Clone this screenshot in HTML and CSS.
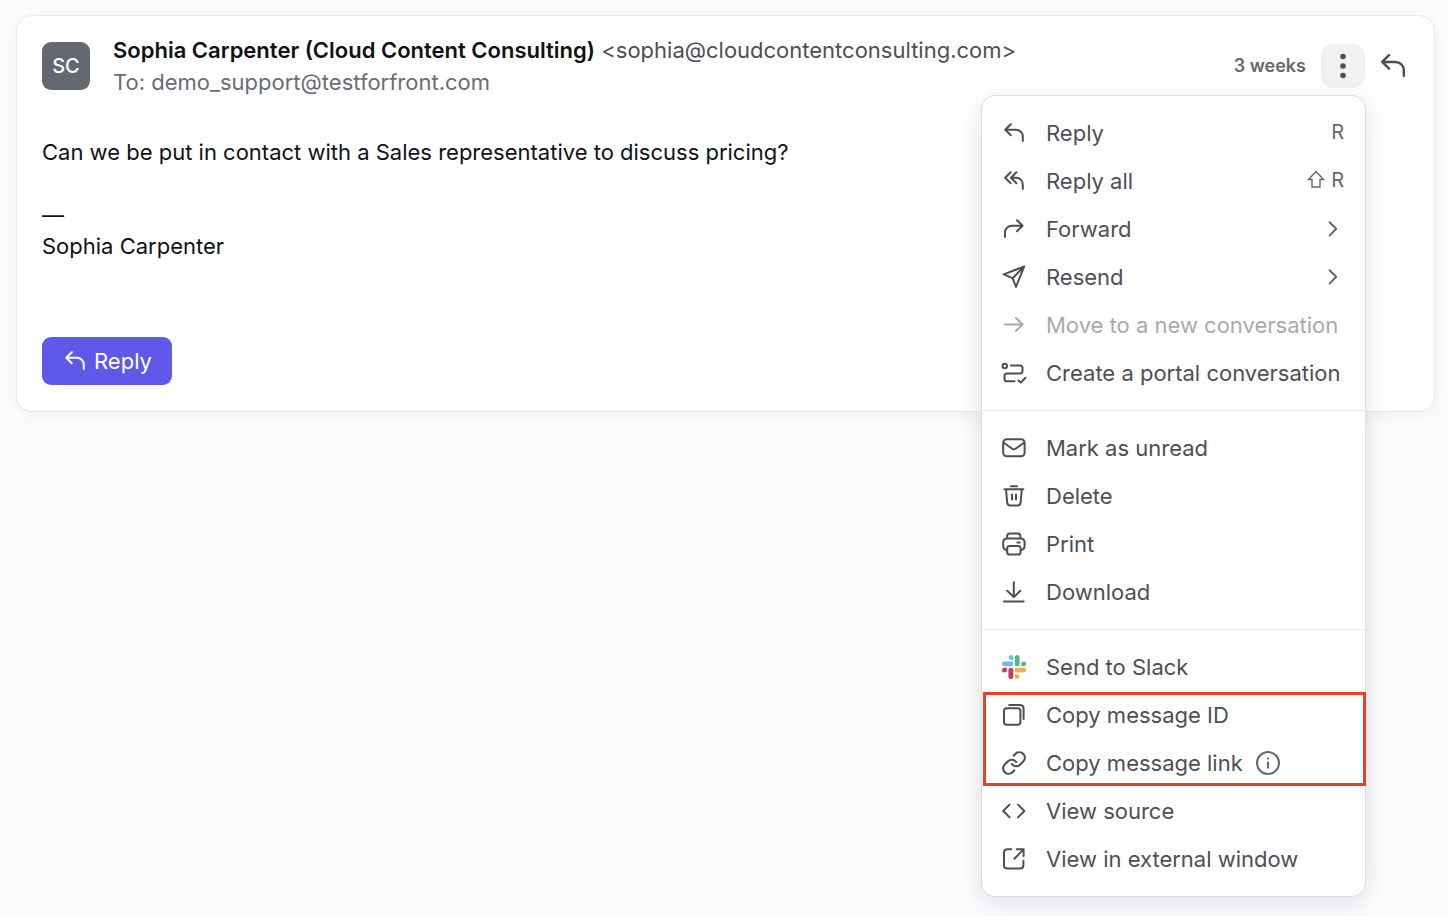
FILE: index.html
```
<!DOCTYPE html>
<html lang="en">
<head>
  <meta charset="UTF-8" />
  <meta name="viewport" content="width=device-width, initial-scale=1.0" />
  <title>Message</title>
  <link rel="stylesheet" href="styles.css">
</head>
<body>
  <article class="message">
    <header class="message-header">
      <div class="avatar">SC</div>
      <div class="message-people">
        <div class="from"><strong>Sophia Carpenter (Cloud Content Consulting)</strong> <span>&lt;sophia@cloudcontentconsulting.com&gt;</span></div>
        <div class="to">To: demo_support@testforfront.com</div>
      </div>
      <time class="age">3 weeks</time>
      <div class="actions">
        <div class="menu-anchor">
          <button class="icon-button active" type="button" aria-label="More actions" aria-expanded="true">
            <svg class="icon-dots" viewBox="0 0 26 26"><circle cx="13" cy="3.5" r="2.8"/><circle cx="13" cy="13" r="2.8"/><circle cx="13" cy="22.5" r="2.8"/></svg>
          </button>

          <div class="menu" role="menu">
            <!-- Reply actions -->
            <div class="menu-section">
              <button class="menu-item" type="button" role="menuitem">
                <svg class="icon" viewBox="0 0 26 26"><path d="M9.8 4.2L4.2 9.7l5.6 5.5M4.4 9.7H15a6.8 6.8 0 0 1 6.8 6.8V21"/></svg>
                <span>Reply</span>
                <kbd>R</kbd>
              </button>
              <button class="menu-item" type="button" role="menuitem">
                <svg class="icon" viewBox="0 0 26 26"><path d="M9.6 4.2L4.2 9.7l5.4 5.5M15.4 4.2L10 9.7l5.4 5.5M10.2 9.7h5a6.6 6.6 0 0 1 6.6 6.6V21"/></svg>
                <span>Reply all</span>
                <kbd><svg class="icon-shift" viewBox="0 0 18 20"><path d="M9 1.5L1.5 9.5H5V17h8V9.5h3.5z"/></svg>R</kbd>
              </button>
              <button class="menu-item" type="button" role="menuitem">
                <svg class="icon" viewBox="0 0 26 26"><path d="M16 4.2l5.6 5.5-5.6 5.5M21.4 9.7H10.8A6.8 6.8 0 0 0 4 16.5V21"/></svg>
                <span>Forward</span>
                <svg class="icon chevron" viewBox="0 0 26 26"><path d="M9.6 6.2l6.6 6.6-6.6 6.8"/></svg>
              </button>
              <button class="menu-item" type="button" role="menuitem">
                <svg class="icon" viewBox="0 0 26 26"><path d="M23.2 2.4L2.6 10.4l9 3.8 3.4 8.8zM23.2 2.4L11.6 14.2"/></svg>
                <span>Resend</span>
                <svg class="icon chevron" viewBox="0 0 26 26"><path d="M9.6 6.2l6.6 6.6-6.6 6.8"/></svg>
              </button>
              <button class="menu-item" type="button" role="menuitem" disabled>
                <svg class="icon" viewBox="0 0 26 26"><path d="M3.8 12.4h17.8M15 6l6.6 6.4-6.6 6.4"/></svg>
                <span>Move to a new conversation</span>
              </button>
              <button class="menu-item" type="button" role="menuitem">
                <svg class="icon" viewBox="0 0 26 26"><circle cx="3.8" cy="6" r="2.2"/><path d="M10 5.5h9q2.5 0 2.5 2.5v3q0 2.4-2.5 2.4H6q-2.5 0-2.5 2.5v3q0 2.4 2.5 2.4h7.5M17.4 20.4l2.4 2.2 4.6-4.8"/></svg>
                <span>Create a portal conversation</span>
              </button>
            </div>

            <!-- Message state -->
            <div class="menu-section">
              <button class="menu-item" type="button" role="menuitem">
                <svg class="icon" viewBox="0 0 26 26"><rect x="2.2" y="4.2" width="21.4" height="17" rx="3.5"/><path d="M2.8 7.8l8.4 6q1.7 1.2 3.4 0l8.4-6"/></svg>
                <span>Mark as unread</span>
              </button>
              <button class="menu-item" type="button" role="menuitem">
                <svg class="icon" viewBox="0 0 26 26"><path d="M3.4 6.2h19M10 3.2h6M5 6.4l1.2 13.2q.3 2.8 3 2.8h7.4q2.7 0 3-2.8l1.2-13.2M11 11.6v5M15 11.6v5"/></svg>
                <span>Delete</span>
              </button>
              <button class="menu-item" type="button" role="menuitem">
                <svg class="icon" viewBox="0 0 26 26"><path d="M6.2 7.6V5q0-2.6 2.6-2.6h8Q19.4 2.4 19.4 5v2.6M6 19.2q-3.8-.6-3.8-4.4v-3q0-4.2 4.2-4.2h13q4.2 0 4.2 4.2v3q0 3.8-3.8 4.4M16.4 11.4h2.4"/><rect x="6.2" y="15" width="13.4" height="8.6" rx="2.4"/></svg>
                <span>Print</span>
              </button>
              <button class="menu-item" type="button" role="menuitem">
                <svg class="icon" viewBox="0 0 26 26"><path d="M12.8 3.2v14.6M6.2 11.8l6.6 6.2 6.6-6.2M3 22.4h19.6"/></svg>
                <span>Download</span>
              </button>
            </div>

            <!-- Sharing and source -->
            <div class="menu-section">
              <button class="menu-item" type="button" role="menuitem">
                <svg class="icon-slack" viewBox="0 0 26 26">
                  <g fill="#63c1ea"><rect x="1" y="7.4" width="11.4" height="4.8" rx="2.4"/><path d="M12.4 5.8H10a2.4 2.4 0 1 1 2.4-2.4z"/></g>
                  <g fill="#54b685"><rect x="13.8" y="1" width="4.8" height="11.4" rx="2.4"/><path d="M20.3 12.2V9.8a2.4 2.4 0 1 1 2.4 2.4z"/></g>
                  <g fill="#e4b34b"><rect x="13.8" y="13.8" width="11.4" height="4.8" rx="2.4"/><path d="M13.8 20.2h2.4a2.4 2.4 0 1 1-2.4 2.4z"/></g>
                  <g fill="#d2365f"><rect x="7.4" y="13.8" width="4.8" height="11.4" rx="2.4"/><path d="M5.8 13.8v2.4a2.4 2.4 0 1 1-2.4-2.4z"/></g>
                </svg>
                <span>Send to Slack</span>
              </button>
              <div class="highlight">
                <button class="menu-item" type="button" role="menuitem">
                  <svg class="icon" viewBox="0 0 26 26"><rect x="3" y="6.2" width="16.4" height="16.6" rx="2.8"/><path d="M8.2 3h10.4q4 0 4 4v10"/></svg>
                  <span>Copy message ID</span>
                </button>
                <button class="menu-item" type="button" role="menuitem">
                  <svg class="icon" viewBox="0 0 24 24"><path d="M10 13a5 5 0 0 0 7.54.54l3-3a5 5 0 0 0-7.07-7.07l-1.72 1.71M14 11a5 5 0 0 0-7.54-.54l-3 3a5 5 0 0 0 7.07 7.07l1.71-1.71"/></svg>
                  <span>Copy message link</span>
                  <svg class="icon info" viewBox="0 0 26 26"><circle cx="13" cy="13" r="11"/><path d="M13 12.4v5.4M13 8.2v.2"/></svg>
                </button>
              </div>
              <button class="menu-item" type="button" role="menuitem">
                <svg class="icon" viewBox="0 0 26 26"><path d="M8.6 6.6L2.2 13l6.4 6.4M17 6.6l6.4 6.4-6.4 6.4"/></svg>
                <span>View source</span>
              </button>
              <button class="menu-item" type="button" role="menuitem">
                <svg class="icon" viewBox="0 0 26 26"><path d="M10.2 3.2H6.4Q3 3.2 3 6.6v12.6q0 3.4 3.4 3.4H19q3.4 0 3.4-3.4v-4.4M13.4 12.8l9-9.4M15.8 3.2h6.8V10"/></svg>
                <span>View in external window</span>
              </button>
            </div>
          </div>
        </div>
        <button class="icon-button" type="button" aria-label="Reply">
          <svg class="icon icon-large" viewBox="0 0 26 26"><path d="M9.8 4.2L4.2 9.7l5.6 5.5M4.4 9.7H15a6.8 6.8 0 0 1 6.8 6.8V21"/></svg>
        </button>
      </div>
    </header>

    <div class="message-body">
      <p>Can we be put in contact with a Sales representative to discuss pricing?</p>
      <p>—<br>Sophia Carpenter</p>
    </div>

    <button class="reply-button" type="button">
      <svg class="icon" viewBox="0 0 26 26"><path d="M9.8 4.2L4.2 9.7l5.6 5.5M4.4 9.7H15a6.8 6.8 0 0 1 6.8 6.8V21"/></svg>
      Reply
    </button>
  </article>
</body>
</html>
```
FILE: styles.css
```
* {
  box-sizing: border-box;
}

body {
  min-height: 100vh;
  margin: 0;
  padding: 15px 13px 16px 16px;
  font-family: Inter, "Liberation Sans", sans-serif;
  font-size: 22px;
  line-height: 32px;
  color: #111116;
  background: #fcfcfe;
}

button {
  font: inherit;
  color: inherit;
  border: none;
  background: none;
  cursor: pointer;
}

.message {
  padding: 18px 19px 26px 25px;
  background: #fff;
  border: 1px solid #e9e9ec;
  border-radius: 16px;
  box-shadow: 0 4px 20px rgba(20, 20, 40, 0.05);
}

/* Header */
.message-header {
  display: flex;
  align-items: center;
}

.avatar {
  flex: none;
  width: 48px;
  height: 48px;
  margin-right: 23px;
  border-radius: 9px;
  background: #656771;
  color: #fff;
  font-size: 20px;
  font-weight: 500;
  line-height: 48px;
  text-align: center;
}

.message-people {
  flex: 1;
  min-width: 0;
}

.from strong {
  font-weight: 600;
}

.from span {
  color: #4f4e57;
}

.to {
  color: #6b6c76;
}

.age {
  margin-right: 15px;
  color: #656771;
  font-size: 18px;
  font-weight: 600;
}

.actions {
  display: flex;
  gap: 6px;
}

.menu-anchor {
  position: relative;
}

.icon-button {
  display: flex;
  align-items: center;
  justify-content: center;
  width: 44px;
  height: 44px;
  padding: 0;
  border-radius: 12px;
  color: #4f4e57;
}

.icon-button.active {
  background: #f1f1f1;
}

/* Icons */
.icon,
.icon-slack {
  flex: none;
  width: 26px;
  height: 26px;
}

.icon {
  fill: none;
  stroke: currentColor;
  stroke-width: 2;
  stroke-linecap: round;
  stroke-linejoin: round;
}

.icon-large {
  width: 32px;
  height: 32px;
}

.icon-dots {
  width: 26px;
  height: 26px;
  fill: currentColor;
}

.icon-shift {
  width: 18px;
  height: 20px;
  fill: none;
  stroke: currentColor;
  stroke-width: 1.4;
}

/* Dropdown menu */
.menu {
  position: absolute;
  top: 51px;
  right: -1px;
  z-index: 1;
  width: 385px;
  background: #fff;
  border: 1px solid #dedee1;
  border-radius: 14px;
  box-shadow: 0 6px 24px rgba(20, 20, 40, 0.12);
}

.menu-section {
  padding: 13px 0;
}

.menu-section + .menu-section {
  border-top: 1px solid #e9e9ee;
}

.menu-item {
  display: flex;
  align-items: center;
  width: 100%;
  height: 48px;
  padding: 0 19px;
  color: #4f4e57;
  text-align: left;
  white-space: nowrap;
}

.menu-item span {
  margin-left: 19px;
}

.menu-item:disabled {
  color: #a9a9ad;
  cursor: default;
}

.menu-item kbd {
  display: flex;
  align-items: center;
  gap: 6px;
  margin-left: auto;
  padding: 0 2px 2px 0;
  color: #656771;
  font-family: inherit;
  font-size: 20px;
}

.chevron {
  margin-left: auto;
  color: #656771;
}

.info {
  margin-left: 12px;
  color: #656771;
}

.highlight {
  position: relative;
}

.highlight::after {
  content: "";
  position: absolute;
  inset: 1px -1px 1px 1px;
  border: 3px solid #eb3f27;
  pointer-events: none;
}

/* Body */
.message-body {
  margin-top: 39px;
  line-height: 31px;
}

.message-body p {
  margin: 0 0 32px;
}

.reply-button {
  display: flex;
  align-items: center;
  gap: 6px;
  height: 48px;
  margin-top: 75px;
  padding: 0 20px;
  border-radius: 9px;
  background: #5f58e8;
  color: #fff;
}
```
